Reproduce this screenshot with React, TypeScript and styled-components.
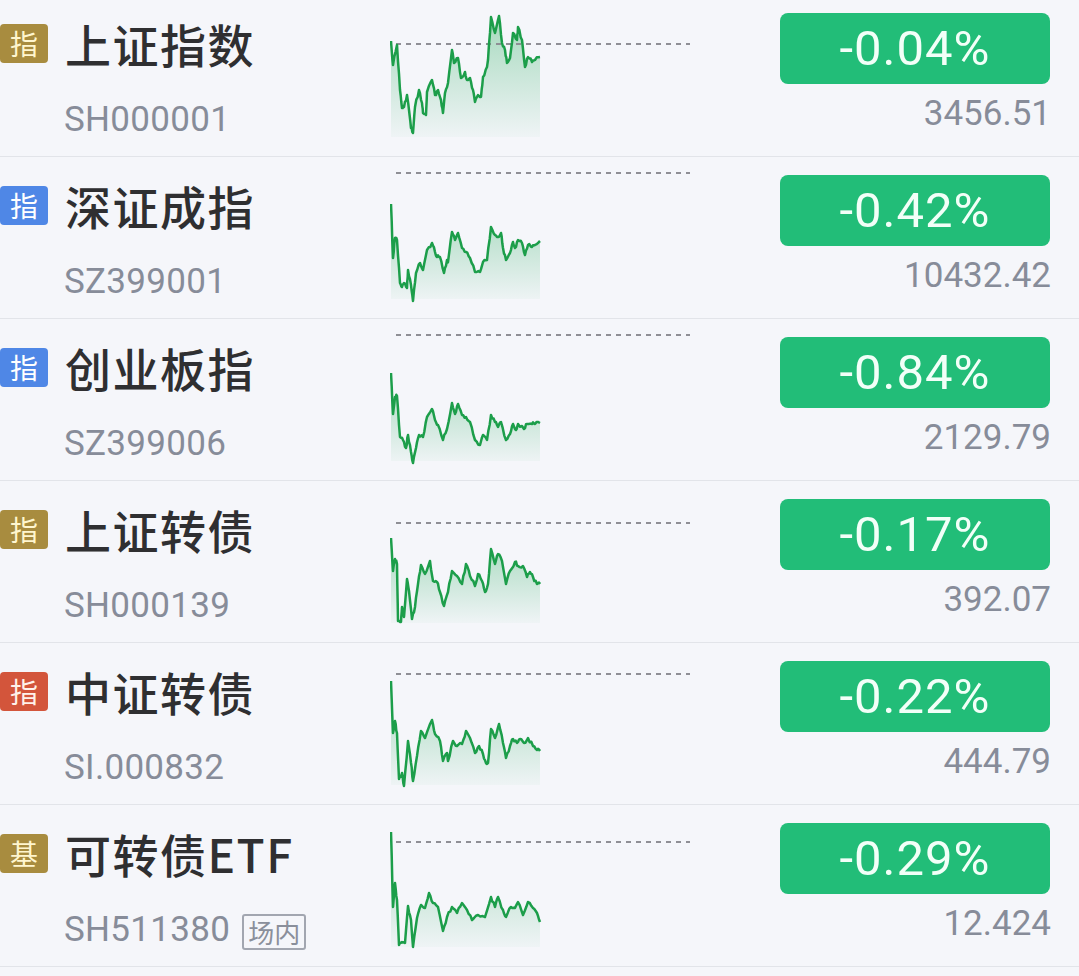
import React from 'react'
import styled, { createGlobalStyle } from 'styled-components'

type Tone = 'gold' | 'blue' | 'red'

interface Quote {
  badge: string
  tone: Tone
  name: string
  code: string
  tag?: string
  pct: string
  price: string
  base: number
  pts: number[][]
}

const ROW = 162
const FIRST_TOP = -5
const CHART_LEFT = 390
const FILL_BOTTOM = 142

const quotes: Quote[] = [
  {
    badge: '指',
    tone: 'gold',
    name: '上证指数',
    code: 'SH000001',
    pct: '-0.04%',
    price: '3456.51',
    base: 44,
    pts: [
      [391, 41], [393, 65], [397, 45], [400, 90], [402, 108], [404, 107], [407, 95], [409, 110],
      [411, 128], [413, 133], [415, 107], [419, 90], [422, 103], [423, 113], [426, 115], [427, 92],
      [432, 80], [435, 95], [438, 90], [441, 100], [443, 113], [445, 93], [448, 83], [452, 50],
      [454, 63], [458, 58], [461, 78], [465, 72], [467, 80], [470, 78], [473, 90], [475, 102],
      [478, 95], [481, 97], [483, 77], [487, 67], [488, 60], [491, 17], [495, 33], [499, 16],
      [502, 43], [505, 50], [507, 63], [510, 58], [513, 33], [517, 40], [518, 27], [522, 40],
      [525, 67], [528, 57], [532, 62], [535, 60], [540, 57],
    ],
  },
  {
    badge: '指',
    tone: 'blue',
    name: '深证成指',
    code: 'SZ399001',
    pct: '-0.42%',
    price: '10432.42',
    base: 173,
    pts: [
      [391, 204], [393, 258], [395, 238], [397, 240], [400, 283], [402, 287], [404, 283], [407, 288],
      [408, 270], [411, 285], [413, 301], [416, 273], [420, 263], [423, 270], [427, 250], [432, 243],
      [435, 252], [437, 257], [440, 257], [444, 273], [447, 260], [448, 262], [452, 232], [455, 240],
      [458, 233], [462, 248], [466, 252], [470, 258], [475, 272], [480, 272], [483, 262], [487, 260],
      [491, 227], [495, 235], [498, 237], [501, 233], [503, 248], [506, 260], [510, 253], [513, 242],
      [515, 248], [518, 240], [522, 243], [525, 255], [528, 245], [532, 247], [535, 245], [540, 241],
    ],
  },
  {
    badge: '指',
    tone: 'blue',
    name: '创业板指',
    code: 'SZ399006',
    pct: '-0.84%',
    price: '2129.79',
    base: 335,
    pts: [
      [391, 373], [393, 414], [395, 397], [397, 396], [400, 437], [403, 440], [406, 448], [408, 435],
      [411, 452], [413, 463], [416, 448], [419, 435], [423, 437], [427, 417], [432, 409], [435, 420],
      [438, 425], [443, 440], [447, 429], [452, 403], [455, 414], [458, 404], [462, 415], [466, 417],
      [470, 422], [475, 440], [480, 445], [483, 435], [487, 440], [491, 415], [495, 422], [498, 427],
      [501, 422], [506, 440], [510, 434], [513, 424], [516, 430], [518, 424], [524, 429], [527, 424],
      [532, 424], [535, 424], [540, 423],
    ],
  },
  {
    badge: '指',
    tone: 'gold',
    name: '上证转债',
    code: 'SH000139',
    pct: '-0.17%',
    price: '392.07',
    base: 523,
    pts: [
      [391, 538], [393, 571], [395, 559], [397, 564], [398, 621], [401, 622], [402, 607], [404, 617],
      [407, 579], [409, 591], [412, 619], [415, 607], [418, 584], [421, 565], [425, 574], [430, 561],
      [433, 581], [437, 582], [440, 592], [444, 606], [448, 592], [452, 571], [457, 576], [462, 584],
      [466, 564], [470, 576], [475, 586], [478, 574], [482, 581], [485, 592], [488, 584], [491, 549],
      [495, 564], [498, 554], [502, 561], [506, 584], [510, 571], [515, 562], [518, 566], [523, 566],
      [527, 577], [530, 572], [533, 577], [537, 584], [540, 584],
    ],
  },
  {
    badge: '指',
    tone: 'red',
    name: '中证转债',
    code: 'SI.000832',
    pct: '-0.22%',
    price: '444.79',
    base: 674,
    pts: [
      [391, 681], [393, 733], [395, 721], [397, 733], [399, 779], [402, 773], [404, 786], [408, 741],
      [411, 763], [413, 781], [417, 756], [421, 731], [425, 738], [432, 720], [435, 734], [440, 741],
      [443, 761], [447, 753], [448, 761], [453, 741], [457, 746], [462, 744], [466, 731], [470, 738],
      [475, 753], [479, 746], [483, 754], [486, 763], [488, 763], [491, 729], [495, 738], [499, 724],
      [503, 743], [506, 758], [510, 746], [513, 739], [517, 743], [520, 739], [524, 743], [528, 738],
      [533, 746], [537, 750], [540, 751],
    ],
  },
  {
    badge: '基',
    tone: 'gold',
    name: '可转债ETF',
    code: 'SH511380',
    tag: '场内',
    pct: '-0.29%',
    price: '12.424',
    base: 842,
    pts: [
      [391, 832], [393, 907], [395, 883], [397, 900], [399, 945], [402, 942], [405, 943], [408, 906],
      [411, 920], [413, 947], [417, 918], [421, 905], [425, 908], [429, 893], [433, 903], [438, 907],
      [443, 931], [447, 917], [452, 907], [457, 913], [462, 903], [467, 910], [472, 920], [478, 915],
      [485, 917], [491, 897], [495, 907], [498, 897], [503, 910], [506, 917], [511, 907], [515, 908],
      [518, 902], [523, 915], [528, 902], [533, 908], [537, 913], [540, 922],
    ],
  },
]

const toneColors: Record<Tone, { bg: string; fg: string }> = {
  gold: { bg: '#a88c3f', fg: '#fff6cf' },
  blue: { bg: '#4f87e6', fg: '#ffffff' },
  red: { bg: '#d3553b', fg: '#fff1ea' },
}

// adds small wiggles between the traced points so the line reads like tick data
const densify = (pts: number[][], seed: number) => {
  let s = seed
  const rnd = () => {
    s = (s * 9301 + 49297) % 233280
    return s / 233280 - 0.5
  }
  const out: number[][] = [pts[0]]
  for (let i = 1; i < pts.length; i++) {
    const [x0, y0] = pts[i - 1]
    const [x1, y1] = pts[i]
    for (let k = 1; k < 3; k++) {
      const t = k / 3
      out.push([x0 + (x1 - x0) * t, y0 + (y1 - y0) * t + rnd() * 3.5])
    }
    out.push(pts[i])
  }
  return out
}

const GlobalStyle = createGlobalStyle`
  html, body {
    margin: 0;
    padding: 0;
    background: #f5f6fa;
    overflow: hidden;
  }
  body {
    font-family: Roboto, "Noto Sans CJK SC", sans-serif;
  }
`

const List = styled.div`
  margin-top: ${FIRST_TOP}px;
  width: 1079px;
`

const Row = styled.div`
  height: ${ROW - 1}px;
  border-bottom: 1px solid #e2e4e9;
  display: grid;
  grid-template-columns: ${CHART_LEFT}px 300px 1fr;
`

const Info = styled.div`
  display: flex;
  flex-direction: column;
  padding-top: 20px;
`

const NameLine = styled.div`
  display: flex;
  align-items: center;
  height: 56px;
`

const Badge = styled.span<{ $tone: Tone }>`
  width: 48px;
  height: 39px;
  border-radius: 4px;
  background: ${p => toneColors[p.$tone].bg};
  color: ${p => toneColors[p.$tone].fg};
  font-family: "Noto Sans CJK SC", sans-serif;
  font-size: 28px;
  line-height: 39px;
  text-align: center;
  flex-shrink: 0;
`

const Name = styled.span`
  margin-left: 17px;
  font-family: "Noto Sans CJK SC", sans-serif;
  font-size: 46px;
  line-height: 56px;
  font-weight: 500;
  color: #2f2f31;
  letter-spacing: 1.5px;
`

const CodeLine = styled.div`
  display: flex;
  align-items: center;
  margin-top: 29px;
  padding-left: 64px;
  height: 40px;
`

const Code = styled.span`
  font-family: Roboto, sans-serif;
  font-size: 35px;
  line-height: 40px;
  color: #878c99;
  letter-spacing: 0.3px;
`

const Tag = styled.span`
  box-sizing: border-box;
  margin-left: 12px;
  margin-top: 4px;
  border: 2px solid #a2a6b0;
  border-radius: 3px;
  padding: 0 4px;
  height: 36px;
  font-family: "Noto Sans CJK SC", sans-serif;
  font-size: 26px;
  line-height: 32px;
  color: #8a8f9b;
`

const Chart = styled.svg`
  display: block;
`

const Quote = styled.div`
  display: flex;
  flex-direction: column;
  align-items: flex-end;
  padding: 18px 29px 0 0;
`

const Change = styled.div`
  width: 270px;
  height: 71px;
  border-radius: 8px;
  background: #22bd78;
  color: #f2fff8;
  display: flex;
  align-items: center;
  justify-content: center;
  font-family: Roboto, sans-serif;
  font-size: 49px;
  letter-spacing: 1px;
`

const Price = styled.div`
  margin-top: 10px;
  margin-right: -1px;
  font-family: Roboto, sans-serif;
  font-size: 35px;
  line-height: 40px;
  color: #878c99;
`

const Sparkline = ({ q, index }: { q: Quote; index: number }) => {
  const top = FIRST_TOP + ROW * index
  const pts = densify(q.pts, 17 + index * 31).map(([x, y]) => [x - CHART_LEFT, y - top])
  const line = pts.map(([x, y]) => `${x.toFixed(1)},${y.toFixed(1)}`).join(' ')
  const first = pts[0]
  const last = pts[pts.length - 1]
  const area = `${line} ${last[0]},${FILL_BOTTOM} ${first[0]},${FILL_BOTTOM}`
  const base = q.base - top
  const gid = `spark-fill-${index}`

  return (
    <Chart width={300} height={ROW - 1} viewBox={`0 0 300 ${ROW - 1}`}>
      <defs>
        <linearGradient id={gid} x1="0" y1="0" x2="0" y2="1">
          <stop offset="0%" stopColor="#2fae62" stopOpacity={0.4} />
          <stop offset="100%" stopColor="#2fae62" stopOpacity={0.03} />
        </linearGradient>
      </defs>
      <polygon points={area} fill={`url(#${gid})`} />
      <line x1={6} y1={base} x2={300} y2={base} stroke="#8f8f95" strokeWidth={2} strokeDasharray="5 5" />
      <polyline points={line} fill="none" stroke="#1c9e4a" strokeWidth={2.5} strokeLinejoin="round" />
    </Chart>
  )
}

const App = () => (
  <>
    <GlobalStyle />
    <List>
      {quotes.map((q, i) => (
        <Row key={q.code}>
          <Info>
            <NameLine>
              <Badge $tone={q.tone}>{q.badge}</Badge>
              <Name>{q.name}</Name>
            </NameLine>
            <CodeLine>
              <Code>{q.code}</Code>
              {q.tag && <Tag>{q.tag}</Tag>}
            </CodeLine>
          </Info>
          <Sparkline q={q} index={i} />
          <Quote>
            <Change>{q.pct}</Change>
            <Price>{q.price}</Price>
          </Quote>
        </Row>
      ))}
    </List>
  </>
)

export default App
